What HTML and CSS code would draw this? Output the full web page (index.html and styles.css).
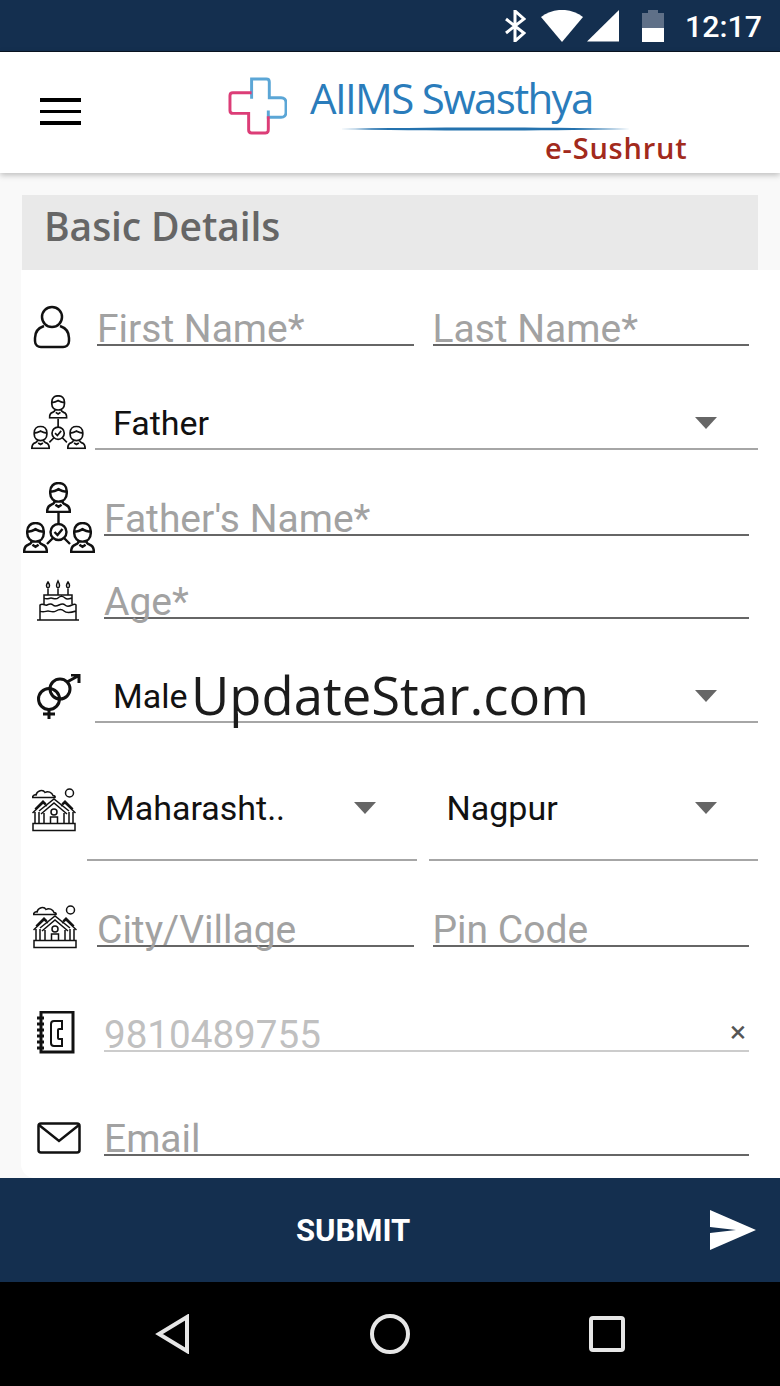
FILE: index.html
```html
<!DOCTYPE html>
<html lang="en">
<head>
<meta charset="utf-8">
<title>AIIMS Swasthya e-Sushrut</title>
<link rel="stylesheet" href="styles.css">
</head>
<body>
<svg class="defs" width="0" height="0" aria-hidden="true">
  <defs>
    <symbol id="person-mini" viewBox="0 0 24 30">
      <path d="M4 9c0-5 3.500-8 8-8s8 3 8 8v2c0 5-3.500 8-8 8s-8-3-8-8zM4 9c4 1 6-1 8-2 2 1 4 3 8 2M8 18v1c0 1-1 2-3 3-3 1-4 3-4 7h22c0-4-1-6-4-7-2-1-3-2-3-3v-1M9 22l3 2 3-2"/>
    </symbol>
    <symbol id="family" viewBox="0 0 72 72">
      <use href="#person-mini" x="23" y="0" width="25" height="31"/>
      <use href="#person-mini" x="0" y="40" width="25" height="31"/>
      <use href="#person-mini" x="47" y="40" width="25" height="31"/>
      <circle cx="35.500" cy="50" r="8"/>
      <path d="M31.500 50l3 3 5-6M35.500 31v11M30 56l-6 6M41 56l6 6"/>
    </symbol>
    <symbol id="houses" viewBox="0 0 44 44">
      <path d="M0.500 9.500c0-2 2-3 3.500-2.500C5 2.500 11 1 13 4.500c3-2 7 0 8 3 1.500 0 2.500 1 2 2zM1 35.500h42v7H1z"/>
      <circle cx="37.500" cy="5" r="4"/>
      <path d="M3 35V24M41 35V24M0.500 25L11 15l4 3M43.500 25L33 15l-4 3M3 21l8-8 3 3M41 21l-8-8-3 3M7 24v11M37 24v11M9 26l13-11 13 11M12 25v10M32 25v10M7 23l15-12 15 12"/>
      <circle cx="22" cy="24" r="3"/>
      <path d="M18.500 35v-6h7v6"/>
    </symbol>
  </defs>
</svg>
<div class="page">
  <div class="status">
    <svg class="st-bt" viewBox="0 0 22 32"><path d="M2 9l18 14-9 8V1l9 8L2 23"/></svg>
    <svg class="st-wifi" viewBox="0 0 42 32"><path d="M21 32L0 7c12-9.500 30-9.500 42 0z"/></svg>
    <svg class="st-signal" viewBox="0 0 32 32"><path d="M0 31.500L32 0v31.500z"/></svg>
    <div class="st-battery"><span class="st-cap"></span><span class="st-empty"></span><span class="st-full"></span></div>
    <span class="st-time">12:17</span>
  </div>

  <header class="topbar">
    <button class="menu" aria-label="Menu"><span></span><span></span><span></span></button>
    <div class="logo">
      <svg class="logo-cross" viewBox="0 0 60 60">
        <path class="c-blue" d="M24 22V2h15c2 0 3 1 3 3v16h12c3 0 5 2 5 5v10c0 3-2 5-5 5H41v-7"/>
        <path class="c-pink" d="M24 16H5c-2 0-3 1-3 3v15c0 2 1 3 3 3h16v17c0 2 1 3 3 3h14c3 0 3-2 3-5V40"/>
      </svg>
      <div class="logo-text">
        <span class="logo-title">AIIMS Swasthya</span>
        <svg class="logo-swoosh" viewBox="0 0 290 6"><path d="M0 3C80 1 210 1 290 3 210 5 80 5 0 3z"/></svg>
        <span class="logo-sub">e-Sushrut</span>
      </div>
    </div>
  </header>

  <main class="content">
    <h1 class="section">Basic Details</h1>
    <form class="card">
      <div class="row r1">
        <svg class="icon i-person" viewBox="0 0 38 44"><circle cx="19" cy="12" r="10"/><path d="M11 21C5 23 2 27 2 33v3c0 4 3 6 6 6h22c3 0 6-2 6-6v-3c0-6-3-10-9-12"/></svg>
        <div class="pair pair-a"><div class="field">First Name*</div><div class="field">Last Name*</div></div>
      </div>
      <div class="row r2">
        <svg class="icon i-family1"><use href="#family"/></svg>
        <div class="select sel-wide"><span>Father</span><i class="caret"></i></div>
      </div>
      <div class="row r3">
        <svg class="icon i-family2"><use href="#family"/></svg>
        <div class="field wide">Father's Name*</div>
      </div>
      <div class="row r4">
        <svg class="icon i-cake" viewBox="0 0 44 44"><path d="M1 42h42M4 42V27c3-2 5 1 7 0s4-2 6 0 4 1 6 0 4-2 6 0 5 1 7 0 4-1 4 0v15M8 26v-9h28v9M8 20c3 2 5 0 7 0s5 2 7 0 5-2 7 0 4 1 7 0M4 33c3 2 6 0 8 0s5 2 8 0 6-2 8 0 6 2 12 0M12 17v-6M22 17v-6M32 17v-6M12 10c-2-1-2-3 0-6 2 3 2 5 0 6zM22 10c-2-1-2-3 0-7 2 4 2 6 0 7zM32 10c-2-1-2-3 0-6 2 3 2 5 0 6z"/></svg>
        <div class="field wide">Age*</div>
      </div>
      <div class="row r5">
        <svg class="icon i-gender" viewBox="0 0 44 45"><circle cx="12" cy="25" r="10.500"/><circle cx="23" cy="15" r="10"/><path d="M12 36v9M6 40h12M30 8l11-6M34 1h8v8"/></svg>
        <div class="select sel-wide"><span class="male">Male</span><i class="caret"></i></div>
        <span class="mark">UpdateStar.com</span>
      </div>
      <div class="row r6">
        <svg class="icon i-houses"><use href="#houses"/></svg>
        <div class="pair pair-b">
          <div class="select sel-half"><span>Maharasht..</span><i class="caret"></i></div>
          <div class="select sel-half"><span>Nagpur</span><i class="caret"></i></div>
        </div>
      </div>
      <div class="row r7">
        <svg class="icon i-houses"><use href="#houses"/></svg>
        <div class="pair pair-a"><div class="field">City/Village</div><div class="field">Pin Code</div></div>
      </div>
      <div class="row r8">
        <svg class="icon i-book" viewBox="0 0 38 44"><path class="thick" d="M4 1h32v40H4zM0 7h7M0 13h7M0 19h7M0 25h7M0 31h7M0 37h7"/><path d="M17 10h8v8h-3c-1 0-1 1-1 1v8c0 1 1 1 1 1h3v7h-8c-2 0-3-1-3-3V13c0-2 1-3 3-3z"/></svg>
        <div class="field wide phone"><span>9810489755</span><span class="clear">&times;</span></div>
      </div>
      <div class="row r9">
        <svg class="icon i-mail" viewBox="0 0 44 32"><rect x="1.500" y="1.500" width="41" height="29" rx="2.500"/><path d="M2 3l20 16L42 3"/></svg>
        <div class="field wide">Email</div>
      </div>
    </form>
  </main>

  <div class="submit">
    <span class="submit-label">SUBMIT</span>
    <svg class="send" viewBox="0 0 46 40"><path d="M0 0l46 20L0 40V23l26-3-26-3z"/></svg>
  </div>

  <nav class="nav">
    <svg class="nav-back" viewBox="0 0 36 40"><path d="M32 3v34L4 20z"/></svg>
    <svg class="nav-home" viewBox="0 0 40 40"><circle cx="20" cy="20" r="18"/></svg>
    <svg class="nav-recent" viewBox="0 0 36 36"><rect x="2" y="2" width="32" height="32" rx="2"/></svg>
  </nav>
</div>
</body>
</html>
```
FILE: styles.css
```css
* { box-sizing: border-box; }
html, body { margin: 0; padding: 0; }
body { width: 780px; height: 1386px; overflow: hidden; font-family: Roboto, sans-serif; background: #fff; }
.defs { position: absolute; }
.page { display: flex; flex-direction: column; width: 780px; height: 1386px; }

.status { height: 52px; flex: none; background: #142f4f; border-bottom: 1px solid #0a1522; display: flex; align-items: center; padding-right: 18px; color: #fff; }
.st-bt { width: 22px; height: 32px; margin-left: auto; fill: none; stroke: #fff; stroke-width: 3; }
.st-wifi { width: 42px; height: 32px; margin-left: 15px; fill: #fff; }
.st-signal { width: 32px; height: 32px; margin-left: 4px; fill: #fff; }
.st-battery { width: 22px; height: 32px; margin-left: 23px; display: flex; flex-direction: column; align-items: center; }
.st-cap { width: 10px; height: 3px; background: #5f7088; }
.st-empty { width: 22px; height: 15px; background: #5f7088; }
.st-full { width: 22px; height: 14px; background: #fff; }
.st-time { font-size: 30.400px; font-weight: 500; margin: 2px 0 0 21px; line-height: 32px; }

.topbar { height: 121px; flex: none; background: #fff; display: flex; align-items: center; position: relative; z-index: 1; box-shadow: 0 2px 6px rgba(0,0,0,.25); }
.menu { border: 0; background: none; padding: 0; margin: 0 0 2px 40px; width: 41px; display: flex; flex-direction: column; gap: 8px; }
.menu span { display: block; height: 3.500px; background: #000; }
.logo { display: flex; margin-left: 147px; align-items: flex-start; }
.logo-cross { width: 59px; height: 59px; margin-top: 17px; fill: none; stroke-width: 3; }
.c-blue { stroke: #5ba6d6; }
.c-pink { stroke: #dc3d77; }
.logo-text { display: flex; flex-direction: column; margin-left: 23px; width: 380px; }
.logo-title { font-family: "Open Sans", sans-serif; font-size: 42px; line-height: 50px; color: #2a7cbb; letter-spacing: -1.650px; margin-top: 13px; }
.logo-swoosh { width: 290px; height: 6px; margin: 3px 0 0 30px; fill: #2472ae; }
.logo-sub { font-family: "Open Sans", sans-serif; font-weight: 600; font-size: 29px; line-height: 34px; color: #a22a1c; align-self: flex-start; margin: -1px 0 0 235px; letter-spacing: .8px; }

.content { flex: 1; min-height: 0; background: #f9f9f9; padding: 22px 0 0 21px; overflow: hidden; }
.section { margin: 0 0 0 1px; width: 736px; height: 75px; background: #e9e9e9; color: #666; font-family: "Open Sans", sans-serif; font-weight: 600; font-size: 39px; line-height: 62px; padding-left: 22px; letter-spacing: -.1px; }
.card { background: #fff; width: 759px; height: 908px; border-radius: 0 0 0 14px; }

.row { position: relative; display: flex; align-items: flex-end; }
.r1 { height: 76px; }
.r2 { height: 104px; }
.r3 { height: 86px; }
.r4 { height: 83px; }
.r5 { height: 104px; }
.r6 { height: 138px; }
.r7 { height: 86px; }
.r8 { height: 105px; }
.r9 { height: 104px; }

.field { color: #a2a2a2; font-size: 39px; line-height: 58px; height: 46px; border-bottom: 2px solid #666; white-space: nowrap; }
.wide { width: 645px; }
.pair { display: flex; }
.pair-a { gap: 19px; width: 652px; }
.pair-a .field { flex: 1; }
.pair-b { gap: 12px; width: 671px; }

.select { height: 60px; padding-top: 8px; border-bottom: 2px solid #a6a6a6; display: flex; align-items: center; justify-content: space-between; color: #111; font-size: 34px; }
.sel-wide { width: 663px; padding-right: 41px; padding-left: 18px; }
.sel-half { flex: 1; height: 100px; padding: 0 41px 4px 18px; }
.caret { width: 0; height: 0; border-left: 11px solid transparent; border-right: 11px solid transparent; border-top: 12px solid #666; }
.mark { position: absolute; left: 170px; top: 41px; font-family: "Open Sans", sans-serif; font-size: 52.600px; line-height: 70px; color: #1c1c1c; white-space: nowrap; }

.icon { display: block; flex: none; fill: none; stroke: #111; stroke-width: 2; }
.i-person { width: 38px; height: 44px; margin: 0 26px -3px 12px; stroke-width: 2.500; }
.i-family1 { width: 55px; height: 55px; margin: 0 9px 0 10px; stroke-width: 2.200; }
.i-family2 { width: 72px; height: 72px; margin: 0 9px -18px 2px; stroke-width: 2.400; }
.i-cake { width: 44px; height: 44px; margin: 0 24px -3px 15px; stroke-width: 1.500; }
.i-gender { width: 44px; height: 45px; margin: 0 14px 4px 16px; stroke-width: 3; }
.i-houses { width: 44px; height: 44px; margin: 0 20px -2px 12px; stroke-width: 1.500; }
.r6 .i-houses { margin: 0 11px 29px 11px; }
.i-book { width: 38px; height: 44px; margin: 0 29px -3px 16px; }
.i-book .thick { stroke-width: 3; }
.i-mail { width: 44px; height: 32px; margin: 0 23px 2px 16px; stroke-width: 2.500; }
.phone { display: flex; justify-content: space-between; border-bottom-color: #ccc; color: #c0c0c0; font-size: 38.600px; }
.clear { color: #555; font-size: 30px; line-height: 52px; margin-right: 3px; }

.submit { height: 104px; flex: none; background: #142f4f; display: flex; align-items: center; position: relative; }
.submit-label { margin-left: 296px; color: #fff; font-weight: 700; font-size: 31px; }
.send { width: 46px; height: 40px; margin-left: auto; margin-right: 24px; fill: #fff; }

.nav { height: 104px; flex: none; background: #000; display: flex; align-items: center; padding-left: 155px; }
.nav svg { fill: none; stroke: #e6e6e6; stroke-width: 4; flex: none; }
.nav-back { width: 36px; height: 40px; }
.nav-home { width: 40px; height: 40px; margin-left: 179px; }
.nav-recent { width: 36px; height: 36px; margin-left: 179px; }
```
